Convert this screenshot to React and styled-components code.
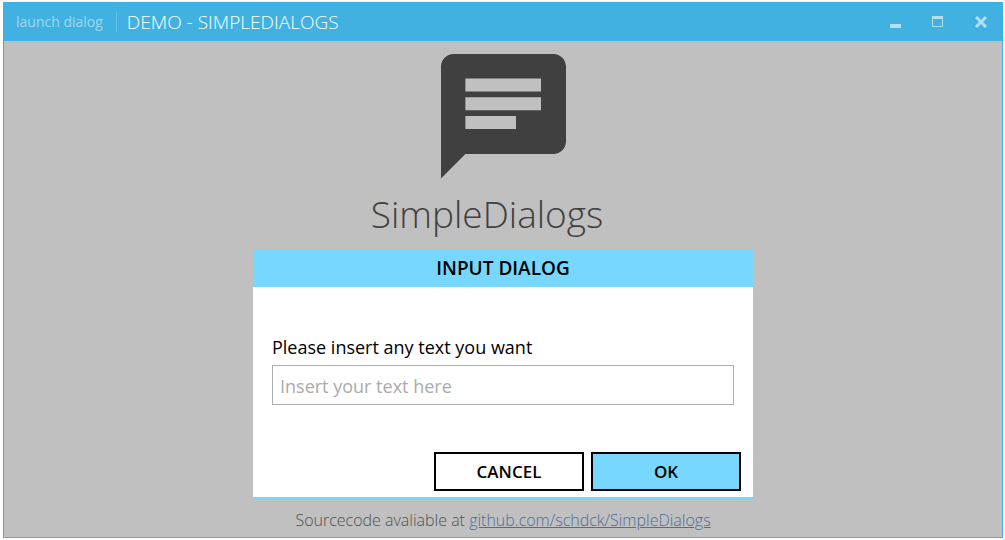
import React from "react";
import styled, { createGlobalStyle } from "styled-components";

const GlobalStyle = createGlobalStyle`
  *, *::before, *::after { box-sizing: border-box; }
  body {
    margin: 0;
    background: #ffffff;
    font-family: "Open Sans", "Noto Sans", sans-serif;
    font-size: 16px;
    line-height: 24px;
  }
`;

const Page = styled.div`
  display: flex;
  min-height: 100vh;
  padding: 2px 2px 2px 3px;
`;

const AppWindow = styled.div`
  flex: 1;
  display: flex;
  flex-direction: column;
  background: #c0c0c0;
  border: 1px solid #41b1e1;
  border-top: 0;
`;

const TitleBar = styled.header`
  display: flex;
  align-items: center;
  height: 39px;
  padding: 0 8px 0 12px;
  background: #41b1e1;
`;

const LaunchButton = styled.button`
  padding: 0 13px 0 0;
  border: 0;
  border-right: 1px solid #67c1e7;
  background: none;
  color: #a0d8f0;
  font: 14px/20px "Open Sans", "Noto Sans", sans-serif;
`;

const WindowTitle = styled.h1`
  flex: 1;
  margin: 0;
  padding-left: 10px;
  color: #ffffff;
  font-size: 19px;
  font-weight: 300;
  line-height: 24px;
`;

const WindowControls = styled.div`
  display: flex;
  gap: 18px;
`;

const ControlButton = styled.button`
  display: flex;
  padding: 0;
  border: 0;
  background: none;
  color: #b3dff3;
`;

const Content = styled.main`
  flex: 1;
  display: flex;
  flex-direction: column;
  align-items: center;
  padding-top: 13px;
`;

const ProductName = styled.h2`
  margin: 5px 0;
  padding-right: 32px;
  color: #404040;
  font-size: 37px;
  font-weight: 300;
  line-height: 60px;
`;

const Dialog = styled.form`
  width: 500px;
  max-width: 100%;
  background: #ffffff;
  border-bottom: 3px solid #77d7ff;
`;

const DialogTitle = styled.h3`
  margin: 0;
  background: #77d7ff;
  color: #000000;
  font-size: 19px;
  font-weight: 600;
  line-height: 38px;
  text-align: center;
`;

const Field = styled.div`
  display: flex;
  flex-direction: column;
  gap: 6px;
  padding: 48px 19px 47px;
`;

const Label = styled.label`
  color: #000000;
  font-size: 18px;
  line-height: 24px;
`;

const TextInput = styled.input`
  height: 40px;
  padding: 2px 7px 0;
  border: 1px solid #abadb3;
  border-radius: 0;
  background: #ffffff;
  color: #000000;
  font: 18px/24px "Open Sans", "Noto Sans", sans-serif;
  outline: none;

  &::placeholder {
    color: #ababab;
    opacity: 1;
  }
`;

const Actions = styled.div`
  display: flex;
  justify-content: flex-end;
  gap: 7px;
  padding: 0 12px 6px;
`;

const ActionButton = styled.button`
  width: 150px;
  height: 39px;
  padding: 0;
  border: 2px solid #000000;
  background: ${({ $primary }) => ($primary ? "#77d7ff" : "#ffffff")};
  color: #000000;
  font: 600 17px/24px "Open Sans", "Noto Sans", sans-serif;
`;

const Source = styled.p`
  margin: 8px 0 0;
  color: #505050;
  font-size: 16px;
  font-weight: 300;
`;

const SourceLink = styled.a`
  color: #4a6e9e;
`;

function ChatIcon() {
  return (
    <svg width="125" height="125" viewBox="2 2 20 20" aria-hidden="true">
      <path
        fill="#404040"
        fillRule="evenodd"
        d="M20 2H4C2.9 2 2 2.9 2 4V21.9L5.9 18H20C21.1 18 22 17.1 22 16V4C22 2.9 21.1 2 20 2ZM5.9 5.9H18V8H5.9ZM5.9 8.9H18V11H5.9ZM5.9 11.9H14V14H5.9Z"
      />
    </svg>
  );
}

function ControlIcon({ children }) {
  return (
    <svg width="25" height="20" viewBox="0 0 25 20" fill="currentColor" aria-hidden="true">
      {children}
    </svg>
  );
}

export default function App() {
  return (
    <>
      <GlobalStyle />
      <Page>
        <AppWindow>
          <TitleBar>
            <LaunchButton type="button">launch dialog</LaunchButton>
            <WindowTitle>DEMO - SIMPLEDIALOGS</WindowTitle>
            <WindowControls>
              <ControlButton type="button" aria-label="Minimize">
                <ControlIcon>
                  <path d="M7 12H18V16H7Z" />
                </ControlIcon>
              </ControlButton>
              <ControlButton type="button" aria-label="Maximize">
                <ControlIcon>
                  <path d="M6 4H17V7H6Z" />
                  <path fill="none" stroke="currentColor" d="M6.5 6.5H16.5V14.5H6.5Z" />
                </ControlIcon>
              </ControlButton>
              <ControlButton type="button" aria-label="Close">
                <ControlIcon>
                  <path fill="none" stroke="currentColor" strokeWidth="3" d="M7 5L17 15M17 5L7 15" />
                </ControlIcon>
              </ControlButton>
            </WindowControls>
          </TitleBar>
          <Content>
            <ChatIcon />
            <ProductName>SimpleDialogs</ProductName>
            <Dialog>
              <DialogTitle>INPUT DIALOG</DialogTitle>
              <Field>
                <Label htmlFor="dialog-text">Please insert any text you want</Label>
                <TextInput id="dialog-text" type="text" placeholder="Insert your text here" />
              </Field>
              <Actions>
                <ActionButton type="button">CANCEL</ActionButton>
                <ActionButton type="button" $primary>
                  OK
                </ActionButton>
              </Actions>
            </Dialog>
            <Source>
              Sourcecode avaliable at{" "}
              <SourceLink href="https://github.com/schdck/SimpleDialogs">
                github.com/schdck/SimpleDialogs
              </SourceLink>
            </Source>
          </Content>
        </AppWindow>
      </Page>
    </>
  );
}
